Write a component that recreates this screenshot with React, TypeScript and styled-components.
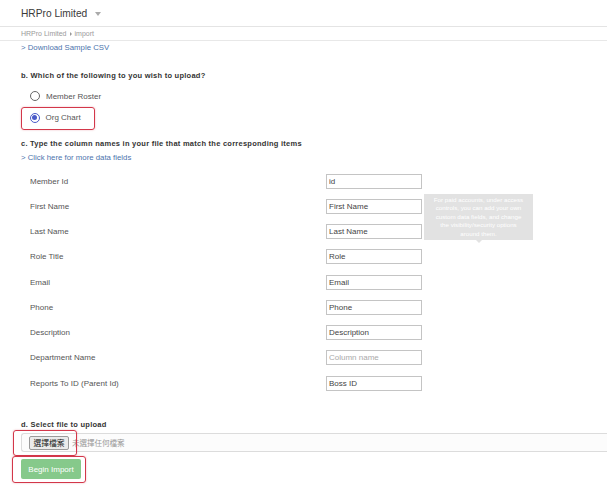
import React from "react";
import styled, { createGlobalStyle } from "styled-components";

const Global = createGlobalStyle`
  html, body { margin: 0; padding: 0; background: #fff; }
  body { font-family: "Liberation Sans", Arial, sans-serif; color: #333; }
  * { box-sizing: border-box; }
`;

const Page = styled.div`
  width: 607px;
  height: 500px;
  overflow: hidden;
  background: #fff;
`;

const Header = styled.div`
  height: 27px;
  padding-left: 21px;
  display: flex;
  align-items: center;
  gap: 8px;
  border-bottom: 1px solid #e4e4e4;
`;

const Title = styled.span`
  font-size: 10.2px;
  color: #3a3a3a;
`;

const Caret = styled.span`
  width: 0;
  height: 0;
  border-left: 3.5px solid transparent;
  border-right: 3.5px solid transparent;
  border-top: 4px solid #aaa;
  margin-top: 1px;
`;

const Crumbs = styled.div`
  height: 14px;
  padding-left: 21px;
  display: flex;
  align-items: center;
  gap: 3px;
  font-size: 7px;
  color: #9a9a9a;
  border-bottom: 1px solid #e8e8e8;
`;

const CrumbArrow = styled.span`
  width: 0;
  height: 0;
  border-top: 2px solid transparent;
  border-bottom: 2px solid transparent;
  border-left: 2.5px solid #999;
`;

const Body = styled.div`
  padding-left: 21px;
`;

const Link = styled.div<{ $top?: number }>`
  height: 14px;
  line-height: 14px;
  margin-top: ${(p) => p.$top ?? 0}px;
  font-size: 7.8px;
  color: #4c74ad;
`;

const Heading = styled.div<{ $top: number }>`
  height: 14px;
  line-height: 14px;
  margin-top: ${(p) => p.$top}px;
  font-size: 7.5px;
  font-weight: bold;
  letter-spacing: 0.25px;
  color: #333;
`;

const RadioRow = styled.div<{ $top: number }>`
  height: 14px;
  margin-top: ${(p) => p.$top}px;
  padding-left: 9px;
  display: flex;
  align-items: center;
  gap: 6px;
  font-size: 8px;
  color: #555;
`;

const Highlight = styled.div`
  width: 74px;
  height: 23px;
  margin-top: 4px;
  border: 1.5px solid #d3374a;
  border-radius: 3px;
  box-shadow: 0 0 2px rgba(200, 40, 60, 0.35);
  display: flex;
  align-items: center;
  padding-left: 7.5px;
  padding-bottom: 2px;
  gap: 6px;
  font-size: 8px;
  color: #555;
`;

const Radio = styled.span<{ $on?: boolean }>`
  width: 10px;
  height: 10px;
  border-radius: 50%;
  border: 1.2px solid ${(p) => (p.$on ? "#4a5ac8" : "#666")};
  display: flex;
  align-items: center;
  justify-content: center;
  &::after {
    content: "";
    width: 5px;
    height: 5px;
    border-radius: 50%;
    background: #4a5ac8;
    display: ${(p) => (p.$on ? "block" : "none")};
  }
`;

const Rows = styled.div`
  margin-top: 3.4px;
`;

const Row = styled.div`
  height: 25.25px;
  display: grid;
  grid-template-columns: 296px 96px;
  align-items: center;
  padding-left: 9px;
`;

const Label = styled.span`
  font-size: 8px;
  color: #555;
`;

const Cell = styled.div`
  position: relative;
  height: 15px;
`;

const Field = styled.input`
  display: block;
  width: 96px;
  height: 15px;
  margin: 0;
  padding: 0 2px;
  border: 1px solid #c4c4c4;
  border-radius: 0;
  font-family: "Liberation Sans", Arial, sans-serif;
  font-size: 8px;
  color: #444;
  background: #fff;
  outline: none;
  &::placeholder { color: #aaa; }
`;

const Tip = styled.div`
  position: absolute;
  left: 98px;
  top: -5px;
  width: 109px;
  height: 46px;
  background: #e2e2e2;
  color: #fff;
  font-size: 6.2px;
  line-height: 8.5px;
  text-align: center;
  padding: 2px 8px 0;
  &::after {
    content: "";
    position: absolute;
    left: 52px;
    bottom: -3px;
    border-left: 3px solid transparent;
    border-right: 3px solid transparent;
    border-top: 3px solid #e2e2e2;
  }
`;

const FileBar = styled.div`
  position: relative;
  margin-top: 1px;
  height: 19px;
  border: 1px solid #dcdcdc;
  border-right: none;
  border-radius: 3px 0 0 3px;
  background: #fcfcfc;
  display: flex;
  align-items: center;
  gap: 3px;
  padding-left: 7px;
`;

const FileButton = styled.span`
  height: 14px;
  width: 40px;
  border: 1px solid #9a9a9a;
  border-radius: 2px;
  background: #ebebeb;
  font-size: 7.8px;
  color: #222;
  display: flex;
  align-items: center;
  justify-content: center;
  font-family: "Noto Sans CJK TC", sans-serif;
`;

const FileNote = styled.span`
  font-size: 7.5px;
  color: #999;
  font-family: "Noto Sans CJK TC", sans-serif;
`;

const Mark = styled.span<{ $l: number; $t: number; $w: number; $h: number }>`
  position: absolute;
  left: ${(p) => p.$l}px;
  top: ${(p) => p.$t}px;
  width: ${(p) => p.$w}px;
  height: ${(p) => p.$h}px;
  border: 1.5px solid #d3374a;
  border-radius: 3px;
  box-shadow: 0 0 2px rgba(200, 40, 60, 0.35);
  pointer-events: none;
`;

const ImportWrap = styled.div`
  position: relative;
  margin-top: 7px;
`;

const ImportButton = styled.button`
  width: 60px;
  height: 20px;
  margin: 0;
  padding: 0;
  border: none;
  border-radius: 2px;
  background: #86c98b;
  color: #fff;
  font-family: "Liberation Sans", Arial, sans-serif;
  font-size: 8px;
  display: block;
`;

const fields: [string, string, boolean?][] = [
  ["Member Id", "id"],
  ["First Name", "First Name"],
  ["Last Name", "Last Name"],
  ["Role Title", "Role"],
  ["Email", "Email"],
  ["Phone", "Phone"],
  ["Description", "Description"],
  ["Department Name", "", true],
  ["Reports To ID (Parent Id)", "Boss ID"],
];

export default function App() {
  return (
    <Page>
      <Global />
      <Header>
        <Title>HRPro Limited</Title>
        <Caret />
      </Header>
      <Crumbs>
        <span>HRPro Limited</span>
        <CrumbArrow />
        <span>import</span>
      </Crumbs>
      <Body>
        <Link>&gt; Download Sample CSV</Link>
        <Heading $top={14}>b. Which of the following to you wish to upload?</Heading>
        <RadioRow $top={6}>
          <Radio />
          <span>Member Roster</span>
        </RadioRow>
        <Highlight>
          <Radio $on />
          <span>Org Chart</span>
        </Highlight>
        <Heading $top={7}>c. Type the column names in your file that match the corresponding items</Heading>
        <Link>&gt; Click here for more data fields</Link>
        <Rows>
          {fields.map(([label, value, empty], i) => (
            <Row key={label}>
              <Label>{label}</Label>
              <Cell>
                <Field
                  readOnly
                  defaultValue={empty ? undefined : value}
                  placeholder={empty ? "Column name" : undefined}
                />
                {i === 1 && (
                  <Tip>
                    For paid accounts, under access controls, you can add your own custom data
                    fields, and change the visibility/security options around them.
                  </Tip>
                )}
              </Cell>
            </Row>
          ))}
        </Rows>
        <Heading $top={22.4}>d. Select file to upload</Heading>
        <FileBar>
          <FileButton>選擇檔案</FileButton>
          <FileNote>未選擇任何檔案</FileNote>
          <Mark $l={-9} $t={-4} $w={64} $h={26} />
        </FileBar>
        <ImportWrap>
          <ImportButton>Begin Import</ImportButton>
          <Mark $l={-9} $t={-3} $w={74} $h={27} />
        </ImportWrap>
      </Body>
    </Page>
  );
}
